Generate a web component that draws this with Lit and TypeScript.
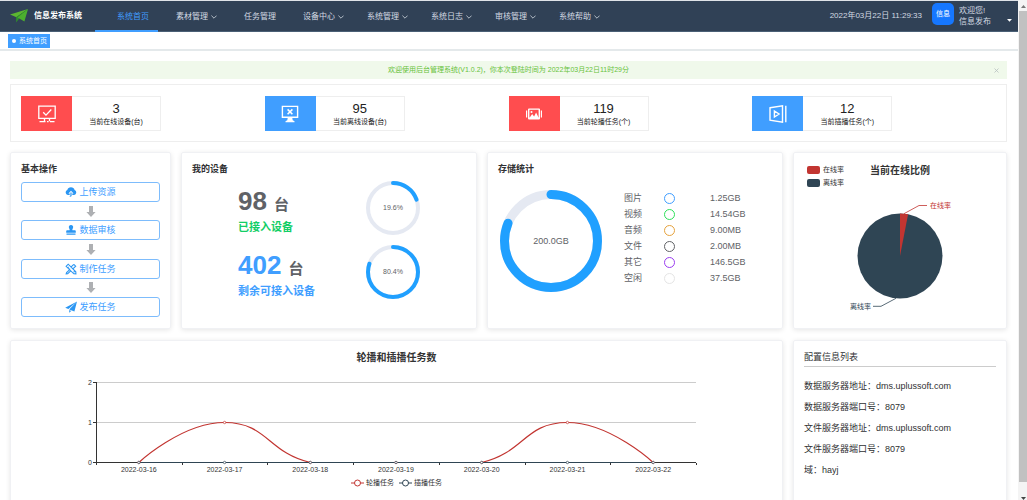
import { LitElement, html, svg, css } from "lit";
import { customElement, property } from "lit/decorators.js";
import { classMap } from "lit/directives/class-map.js";

const FONT = css`"Liberation Sans", "Noto Sans CJK SC", sans-serif`;

/** Circular progress indicator with a label in the middle. */
@customElement("progress-ring")
class ProgressRing extends LitElement {
  @property({ type: Number }) percent = 0;
  @property({ type: Number }) size = 54;
  @property({ type: Number }) stroke = 4;
  @property() label = "";

  static styles = css`
    :host {
      display: grid;
      place-items: center;
      flex: none;
      color: #606266;
      font-family: ${FONT};
    }
    svg,
    span {
      grid-area: 1 / 1;
    }
    .track {
      stroke: #e5e9f2;
    }
    .bar {
      stroke: #20a0ff;
      stroke-linecap: round;
    }
  `;

  render() {
    const c = this.size / 2;
    const r = c - this.stroke / 2;
    return html`
      <svg width=${this.size} height=${this.size} fill="none" stroke-width=${this.stroke} aria-hidden="true">
        <circle class="track" cx=${c} cy=${c} r=${r}></circle>
        <circle class="bar" cx=${c} cy=${c} r=${r} pathLength="100"
          stroke-dasharray="${this.percent} 100" transform="rotate(-90 ${c} ${c})"></circle>
      </svg>
      <span>${this.label}</span>
    `;
  }
}

/** Line chart of the daily task counts. */
@customElement("task-chart")
class TaskChart extends LitElement {
  static styles = css`
    :host {
      display: block;
    }
    svg {
      display: block;
      width: 100%;
      height: auto;
    }
    text {
      font: 7px/1 ${FONT};
      fill: #333;
    }
    .mid {
      text-anchor: middle;
    }
    .end {
      text-anchor: end;
    }
    .grid {
      stroke: #ccc;
    }
    .axis {
      stroke: #333;
    }
    .red {
      stroke: #c23531;
      stroke-width: 1.2;
      fill: none;
    }
    .navy {
      stroke: #2f4554;
      stroke-width: 1.2;
      fill: none;
    }
    .dot {
      fill: #fff;
      stroke-width: 0.7;
    }
  `;

  private days = [16, 17, 18, 19, 20, 21, 22];
  private rotation = [0, 1, 0, 0, 0, 1, 0];

  render() {
    const left = 85;
    const right = 685;
    const zero = 90.5;
    const unit = 40;
    const step = (right - left) / 7;
    const x = (i: number) => left + step * (i + 0.5);
    const y = (v: number) => zero - v * unit;
    const h = step / 2;
    const q = unit / 4;
    const curve = `M${x(0)} ${zero}
      C${x(0)} ${zero} ${x(1) - h} ${y(1)} ${x(1)} ${y(1)}
      C${x(1) + h} ${y(1)} ${x(2) - h} ${zero - q} ${x(2)} ${zero}
      H${x(4)}
      C${x(4) + h} ${zero - q} ${x(5) - h} ${y(1)} ${x(5)} ${y(1)}
      C${x(5) + h} ${y(1)} ${x(6)} ${zero} ${x(6)} ${zero}`;
    return html`
      <svg viewBox="0 0 771 104" role="img" aria-label="轮播和插播任务数">
        ${[1, 2].map((v) => svg`<path class="grid" d="M${left} ${y(v)}H${right}"></path>`)}
        <path class="axis" d="M85.5 10V91M85 90.5H685"></path>
        ${[0, 1, 2].map(
          (v) => svg`<path class="axis" d="M82 ${y(v)}H85"></path>
            <text class="end" x="81" y=${y(v) + 2}>${v}</text>`,
        )}
        ${[0, 1, 2, 3, 4, 5, 6, 7].map(
          (i) => svg`<path class="axis" d="M${Math.round(left + step * i) + 0.5} 91V93"></path>`,
        )}
        ${this.days.map((d, i) => svg`<text class="mid" x=${x(i)} y="100">2022-03-${d}</text>`)}
        <path class="red" d=${curve}></path>
        <path class="navy" d="M${x(0)} ${zero}H${x(6)}"></path>
        ${this.rotation.map((v, i) => svg`<circle class="red dot" cx=${x(i)} cy=${y(v)} r="1.2"></circle>`)}
        ${this.days.map((_, i) => svg`<circle class="navy dot" cx=${x(i)} cy=${zero} r="1.2"></circle>`)}
      </svg>
    `;
  }
}

const icons = {
  plane: html`<svg width="18" height="14" viewBox="0 0 18 14">
    <path fill="#5cb531" d="M0 5.6 18 0 6.4 8.2z"></path>
    <path fill="#2f8f2b" d="M18 0 6.2 8v5.6l2.4-3.4z"></path>
    <path fill="#4caf2e" d="M18 0 7.6 8.4l6.8 4.2z"></path>
  </svg>`,
  chevron: html`<svg width="6" height="4" viewBox="0 0 6 4" fill="none" stroke="currentColor" stroke-width=".8">
    <path d="m.4.6 2.600 2.600L5.600.6"></path>
  </svg>`,
  online: html`<svg width="18" height="18" viewBox="0 0 18 18" fill="none" stroke="#fff" stroke-width="1.3">
    <path d="M.8 1.2h16.4v12.2H.8zM5.2 7.2l2.8 2.9 5.3-5.6M6.5 13.6v2.6m5-2.6v2.6M1.5 16.7h6m1.5 0h1.6m1.4 0h4.5"></path>
  </svg>`,
  offline: html`<svg width="18" height="18" viewBox="0 0 18 18" fill="none" stroke="#fff" stroke-width="1.4">
    <path d="M1.4 1.4h15.2v10.8H1.4z"></path>
    <path stroke-width="1.6" d="m6.6 4.4 4.8 4.8m0-4.8L6.6 9.2"></path>
    <path fill="#fff" stroke="none" d="M6.8 12.5h4.4l.5 2.7 1.8 1v1h-9v-1l1.8-1z"></path>
  </svg>`,
  picture: html`<svg width="16" height="12" viewBox="0 0 16 12">
    <path fill="#fff" d="M0 2.4h1.2v7.2H0zM14.8 2.4H16v7.2h-1.2z"></path>
    <path fill="#fff" fill-rule="evenodd" d="M3 .4h10q1 0 1 1v9.2q0 1-1 1H3q-1 0-1-1V1.4q0-1 1-1zM3.4 1.8v7.8h9.200V1.8z"></path>
    <path fill="#fff" d="M3.400 9.900 6.200 6l1.900 2.400 2-3.800 2.700 5.300z"></path>
    <circle fill="#fff" cx="5.500" cy="3.900" r="1"></circle>
  </svg>`,
  play: html`<svg width="18" height="18" viewBox="0 0 18 18" fill="none" stroke="#fff" stroke-width="1.4">
    <path d="M1 2.8 13.500.9v16.200L1 15.200zM16.800.8v16.400M5.400 6v6l4.600-3z"></path>
  </svg>`,
  upload: html`<svg width="12" height="12" viewBox="0 0 12 12" fill="#2a96f3">
    <path d="M2.9 9A2.600 2.600 0 0 1 2.300 4 3.800 3.800 0 0 1 9.600 4 2.600 2.600 0 0 1 9.100 9H7.300V7.400h1.300L6 4.700 3.400 7.400h1.300V9z"></path>
    <path d="M5.400 6.500h1.200v3.300q0 1-1.900 1v-.9q.7 0 .7-.4z"></path>
  </svg>`,
  stamp: html`<svg width="12" height="12" viewBox="0 0 12 12" fill="#2a96f3">
    <path d="M6 1a2.200 2.200 0 0 1 1.900 3.300Q7 5.600 7.400 6.300h2.500q.9 0 .9.9v1.600H1.200V7.200q0-.9.900-.9h2.500q.4-.7-.5-2A2.200 2.200 0 0 1 6 1zM1.500 9.600h9v1.100h-9z"></path>
  </svg>`,
  design: html`<svg width="12" height="12" viewBox="0 0 12 12" fill="none" stroke="#2a96f3" stroke-width="1.1">
    <path d="M1.100 3.300 3.200 1.200 10.800 8.800 10.900 10.900 8.800 10.800zM8.800 1.300l1.900 1.900-3.100 3M5.900 4.200l2.900-2.900M4.700 6.700 1.600 9.600l-.4 1.300 1.500-.2 3.300-3M2.700 4.800l1-1M4.300 6.400l.8-.8M9.500 8.400l-.9.9"></path>
  </svg>`,
  send: html`<svg width="12" height="12" viewBox="0 0 12 12" fill="#2a96f3">
    <path d="M12 .5.200 6.800l3.200 1.300zM12 .5 4.200 8.500l5.200 2.100zM4.200 9l2 .9-2 1.800z"></path>
  </svg>`,
  down: html`<svg width="10" height="11" viewBox="0 0 10 11" fill="#aeb0b3">
    <path d="M3 0h4v6h2.600L5 11 .4 6H3z"></path>
  </svg>`,
};

const menu = [
  { text: "系统首页", active: true },
  { text: "素材管理", sub: true },
  { text: "任务管理" },
  { text: "设备中心", sub: true },
  { text: "系统管理", sub: true },
  { text: "系统日志", sub: true },
  { text: "审核管理", sub: true },
  { text: "系统帮助", sub: true },
];

const stats = [
  { icon: icons.online, value: 3, label: "当前在线设备(台)", red: true },
  { icon: icons.offline, value: 95, label: "当前离线设备(台)" },
  { icon: icons.picture, value: 119, label: "当前轮播任务(个)", red: true },
  { icon: icons.play, value: 12, label: "当前插播任务(个)" },
];

const steps = [
  { icon: icons.upload, text: "上传资源" },
  { icon: icons.stamp, text: "数据审核" },
  { icon: icons.design, text: "制作任务" },
  { icon: icons.send, text: "发布任务" },
];

const storage = [
  ["图片", "c-blue", "1.25GB"],
  ["视频", "c-green", "14.54GB"],
  ["音频", "c-orange", "9.00MB"],
  ["文件", "c-gray", "2.00MB"],
  ["其它", "c-purple", "146.5GB"],
  ["空闲", "c-light", "37.5GB"],
];

const config = [
  ["数据服务器地址", "dms.uplussoft.com"],
  ["数据服务器端口号", "8079"],
  ["文件服务器地址", "dms.uplussoft.com"],
  ["文件服务器端口号", "8079"],
  ["域", "hayj"],
];

@customElement("app-root")
class AppRoot extends LitElement {
  static styles = css`
    :host {
      display: grid;
      grid-template-columns: minmax(0, 1fr) 9px;
      height: 100vh;
      overflow: hidden;
      background: #fff;
      color: #303133;
      font: 9px/12px ${FONT};
    }
    * {
      box-sizing: border-box;
    }
    svg {
      display: block;
      flex: none;
    }
    a {
      color: inherit;
      text-decoration: none;
    }
    button {
      font: inherit;
      color: inherit;
      background: none;
      border: 0;
      padding: 0;
      cursor: pointer;
    }
    h1,
    h2,
    p,
    dl,
    dd,
    ul,
    ol {
      margin: 0;
      padding: 0;
      list-style: none;
    }
    .page {
      min-width: 0;
      overflow: hidden;
    }

    /* header */
    .header {
      display: flex;
      height: 32px;
      border-top: 1px solid #dfe3e8;
      border-bottom: 1px solid #4a6076;
      background: #304156;
      color: #d3dae2;
      font-size: 8px;
    }
    .brand {
      display: flex;
      align-items: center;
      gap: 6px;
      width: 95px;
      padding-left: 10px;
      font-size: 8px;
      color: #fff;
      white-space: nowrap;
    }
    .menu {
      display: flex;
      flex: 1;
    }
    .item {
      display: flex;
      align-items: center;
      gap: 3px;
      height: 31px;
      padding: 3px 9px 0 22px;
      border-bottom: 2px solid transparent;
      white-space: nowrap;
    }
    .item.sub {
      padding: 3px 5px 0 18px;
    }
    .item.active {
      color: #409eff;
      border-color: #409eff;
    }
    .user {
      display: flex;
      align-items: center;
      white-space: nowrap;
    }
    .avatar {
      display: grid;
      place-items: center;
      width: 22px;
      height: 22px;
      margin: 0 5px 4px 10px;
      border-radius: 5px;
      background: #1677ff;
      color: #fff;
      font-size: 7px;
    }
    .hello {
      width: 48px;
      line-height: 11px;
    }
    .caret {
      display: grid;
      width: 11px;
      height: 20px;
      align-items: end;
      padding-bottom: 4px;
    }

    /* tab strip */
    .tabs {
      padding: 2px 8px;
      height: 19px;
      border-bottom: 2px solid #e4e9eb;
    }
    .tab {
      display: inline-flex;
      align-items: center;
      gap: 3px;
      height: 14px;
      padding: 0 3px 0 4px;
      background: #409eff;
      color: #fff;
      font-size: 7px;
    }
    .tab::before {
      content: "";
      width: 4px;
      height: 4px;
      border-radius: 50%;
      background: #fff;
    }

    .body {
      padding: 10px 11px 10px 10px;
    }
    .alert {
      display: flex;
      align-items: center;
      height: 18px;
      padding: 0 8px 0 13px;
      background: #f0f9eb;
      color: #67c23a;
      font-size: 7px;
    }
    .alert p {
      flex: 1;
      text-align: center;
    }
    .close {
      color: #b7c0c0;
    }

    /* counters */
    .stats {
      display: grid;
      grid-template-columns: repeat(4, 1fr);
      margin-top: 5px;
      padding: 11px 10px 10px;
      border: 1px solid #eee;
    }
    .stat {
      display: flex;
      width: 140px;
      height: 35px;
      border: 1px solid #eee;
      border-left: 0;
    }
    .badge {
      display: grid;
      place-items: center;
      width: 51px;
      margin: -1px 0;
      background: #409eff;
    }
    .badge.red {
      background: #ff4d4f;
    }
    .figure {
      flex: 1;
      text-align: center;
      font-size: 7px;
      line-height: 10px;
      color: #222;
    }
    .figure strong {
      display: block;
      padding-top: 4px;
      font-size: 13px;
      font-weight: 400;
      line-height: 16px;
    }

    /* cards */
    .cards {
      display: grid;
      grid-template-columns: 161fr 296fr 296fr 214fr;
      gap: 11px 10px;
      margin-top: 10px;
    }
    .card {
      min-width: 0;
      min-height: 177px;
      padding: 10px;
      border: 1px solid #f0f1f4;
      border-radius: 2px;
      box-shadow: 0 1px 5px rgba(0, 0, 0, 0.1);
    }
    h2 {
      font-size: 9px;
      line-height: 12px;
    }
    .flow {
      display: flex;
      flex-direction: column;
      justify-content: space-between;
      height: 135px;
      margin-top: 7px;
    }
    .step {
      display: flex;
      flex-direction: column;
      align-items: center;
    }
    .step button {
      display: flex;
      align-items: center;
      justify-content: center;
      gap: 2px;
      width: 100%;
      height: 20px;
      border: 1px solid #7dbcfc;
      border-radius: 3px;
      color: #409eff;
    }
    .devices {
      display: grid;
      gap: 10px;
      padding: 6px 0 0 46px;
    }
    .device {
      display: flex;
      align-items: flex-end;
      font-weight: 700;
      font-size: 11px;
      color: #13ce66;
      white-space: nowrap;
    }
    .device > div {
      width: 128px;
      line-height: 16px;
    }
    .device p {
      display: flex;
      align-items: baseline;
      gap: 7px;
      height: 32px;
      font-size: 15px;
      line-height: 28px;
      color: #606266;
    }
    .device b {
      font-size: 26px;
    }
    .device.free,
    .device.free b {
      color: #409eff;
    }
    .small {
      font-size: 7px;
      font-weight: 400;
    }
    .storage {
      display: flex;
      align-items: center;
      gap: 22px;
      padding: 15px 0 0 2px;
      font-size: 9px;
      color: #606266;
    }
    table {
      border-collapse: collapse;
      margin-bottom: 6px;
    }
    th,
    td {
      height: 16px;
      padding: 0;
      font-weight: 400;
      text-align: left;
      line-height: 12px;
    }
    th {
      width: 40px;
    }
    .mark {
      width: 46px;
    }
    .mark i {
      display: block;
      width: 11px;
      height: 11px;
      border: 1px solid currentColor;
      border-radius: 50%;
    }
    .c-blue { color: #409eff; }
    .c-green { color: #2ee05a; }
    .c-orange { color: #e6a23c; }
    .c-gray { color: #606266; }
    .c-purple { color: #9a3df0; }
    .c-light { color: #e5e5e5; }

    .ratio {
      padding: 11px 12px 10px 13px;
    }
    .ratio-head {
      display: grid;
      grid-template-columns: 63px 1fr;
      color: #333;
    }
    .ratio-head h2,
    .chart h2 {
      font-size: 10px;
      line-height: 14px;
    }
    .keys {
      display: grid;
      gap: 1px;
      font-size: 7px;
    }
    .keys li {
      display: flex;
      align-items: center;
      gap: 3px;
    }
    .keys li::before {
      content: "";
      width: 13px;
      height: 8px;
      border-radius: 2px;
      background: #c23531;
    }
    .keys .off::before {
      background: #2f4554;
    }
    .pie {
      width: 100%;
      height: auto;
    }
    .pie text {
      font-size: 7px;
    }
    .chart {
      grid-column: span 3;
      padding: 10px 0;
    }
    .chart h2 {
      text-align: center;
      color: #333;
    }
    .chart task-chart {
      margin-top: 7px;
    }
    .legend {
      display: flex;
      justify-content: center;
      gap: 5px;
      padding-top: 1px;
      font-size: 7px;
    }
    .legend li {
      display: flex;
      align-items: center;
      gap: 2px;
    }
    .config h2 {
      padding-bottom: 3px;
      border-bottom: 1px solid #ccc;
      font-weight: 400;
    }
    .config dl {
      padding-top: 9px;
    }
    .config dl div {
      display: flex;
      line-height: 21px;
      white-space: nowrap;
    }

    .scroll {
      display: flex;
      flex-direction: column;
      align-items: center;
      padding: 5px 0 0 1px;
      gap: 3px;
      background: #f4f4f4;
    }
    .thumb {
      align-self: stretch;
      flex: 1;
      margin-bottom: 12px;
      background: #c1c1c1;
    }
  `;

  private renderRatio() {
    return html`
      <section class="card ratio">
        <div class="ratio-head">
          <ul class="keys">
            <li>在线率</li>
            <li class="off">离线率</li>
          </ul>
          <h2>当前在线比例</h2>
        </div>
        <svg class="pie" viewBox="0 0 187 128" role="img" aria-label="当前在线比例">
          <circle cx="93" cy="67" r="42.5" fill="#2f4554"></circle>
          <path fill="#c23531" d="M93 67V24.500A42.500 42.500 0 0 1 101.100 25.300z"></path>
          <path fill="none" stroke="#c23531" stroke-width=".8" d="M97 24.700 112 16.500H120"></path>
          <path fill="none" stroke="#2f4554" stroke-width=".8" d="M89 109.300 74 117.300H66"></path>
          <text x="123" y="19" fill="#c23531">在线率</text>
          <text x="64" y="120" text-anchor="end" fill="#2f4554">离线率</text>
        </svg>
      </section>
    `;
  }

  private renderKey(color: string, text: string) {
    return html`<li>
      <svg width="13" height="8" viewBox="0 0 13 8" fill="#fff" stroke=${color}>
        <path d="M0 4h13"></path>
        <circle cx="6.500" cy="4" r="3"></circle>
      </svg>
      ${text}
    </li>`;
  }

  render() {
    return html`
      <div class="page">
        <header class="header">
          <h1 class="brand">${icons.plane}信息发布系统</h1>
          <nav class="menu">
            ${menu.map(
              (m) => html`<a href="#" class=${classMap({ item: true, sub: !!m.sub, active: !!m.active })}
                >${m.text}${m.sub ? icons.chevron : ""}</a>`,
            )}
          </nav>
          <div class="user">
            <time>2022年03月22日 11:29:33</time>
            <span class="avatar">信息</span>
            <span class="hello">欢迎您!<br />信息发布</span>
            <button class="caret" aria-label="用户菜单">
              <svg width="5" height="3" viewBox="0 0 5 3"><path fill="#fff" d="M0 0h5L2.500 2.800z"></path></svg>
            </button>
          </div>
        </header>
        <nav class="tabs"><a class="tab" href="#">系统首页</a></nav>

        <main class="body">
          <div class="alert">
            <p>欢迎使用后台管理系统(V1.0.2)，你本次登陆时间为 2022年03月22日11时29分</p>
            <button class="close" aria-label="关闭">
              <svg width="5" height="5" viewBox="0 0 5 5" stroke="currentColor" stroke-width=".8">
                <path d="m.5.5 4 4m0-4-4 4"></path>
              </svg>
            </button>
          </div>

          <section class="stats">
            ${stats.map(
              (s) => html`<div class="stat">
                <div class=${classMap({ badge: true, red: !!s.red })}>${s.icon}</div>
                <div class="figure"><strong>${s.value}</strong>${s.label}</div>
              </div>`,
            )}
          </section>

          <div class="cards">
            <section class="card">
              <h2>基本操作</h2>
              <ol class="flow">
                ${steps.map(
                  (s, i) => html`<li class="step"><button>${s.icon}${s.text}</button></li>
                    ${i < steps.length - 1 ? html`<li class="step" aria-hidden="true">${icons.down}</li>` : ""}`,
                )}
              </ol>
            </section>

            <section class="card">
              <h2>我的设备</h2>
              <div class="devices">
                <div class="device">
                  <div><p><b>98</b>台</p>已接入设备</div>
                  <progress-ring class="small" percent="19.6" label="19.6%"></progress-ring>
                </div>
                <div class="device free">
                  <div><p><b>402</b>台</p>剩余可接入设备</div>
                  <progress-ring class="small" percent="80.4" label="80.4%"></progress-ring>
                </div>
              </div>
            </section>

            <section class="card">
              <h2>存储统计</h2>
              <div class="storage">
                <progress-ring percent="81.25" size="102" stroke="9" label="200.0GB"></progress-ring>
                <table>
                  ${storage.map(
                    ([name, color, value]) => html`<tr>
                      <th scope="row">${name}</th>
                      <td class="mark ${color}"><i></i></td>
                      <td>${value}</td>
                    </tr>`,
                  )}
                </table>
              </div>
            </section>

            ${this.renderRatio()}

            <section class="card chart">
              <h2>轮播和插播任务数</h2>
              <task-chart></task-chart>
              <ul class="legend">
                ${this.renderKey("#c23531", "轮播任务")} ${this.renderKey("#2f4554", "插播任务")}
              </ul>
            </section>

            <section class="card config">
              <h2>配置信息列表</h2>
              <dl>
                ${config.map(([k, v]) => html`<div><dt>${k}：</dt><dd>${v}</dd></div>`)}
              </dl>
            </section>
          </div>
        </main>
      </div>
      <div class="scroll" aria-hidden="true">
        <svg width="5" height="3" viewBox="0 0 5 3"><path fill="#777" d="M0 3h5L2.500 0z"></path></svg>
        <div class="thumb"></div>
        <svg width="5" height="3" viewBox="0 0 5 3"><path fill="#444" d="M0 0h5L2.500 3z"></path></svg>
      </div>
    `;
  }
}
